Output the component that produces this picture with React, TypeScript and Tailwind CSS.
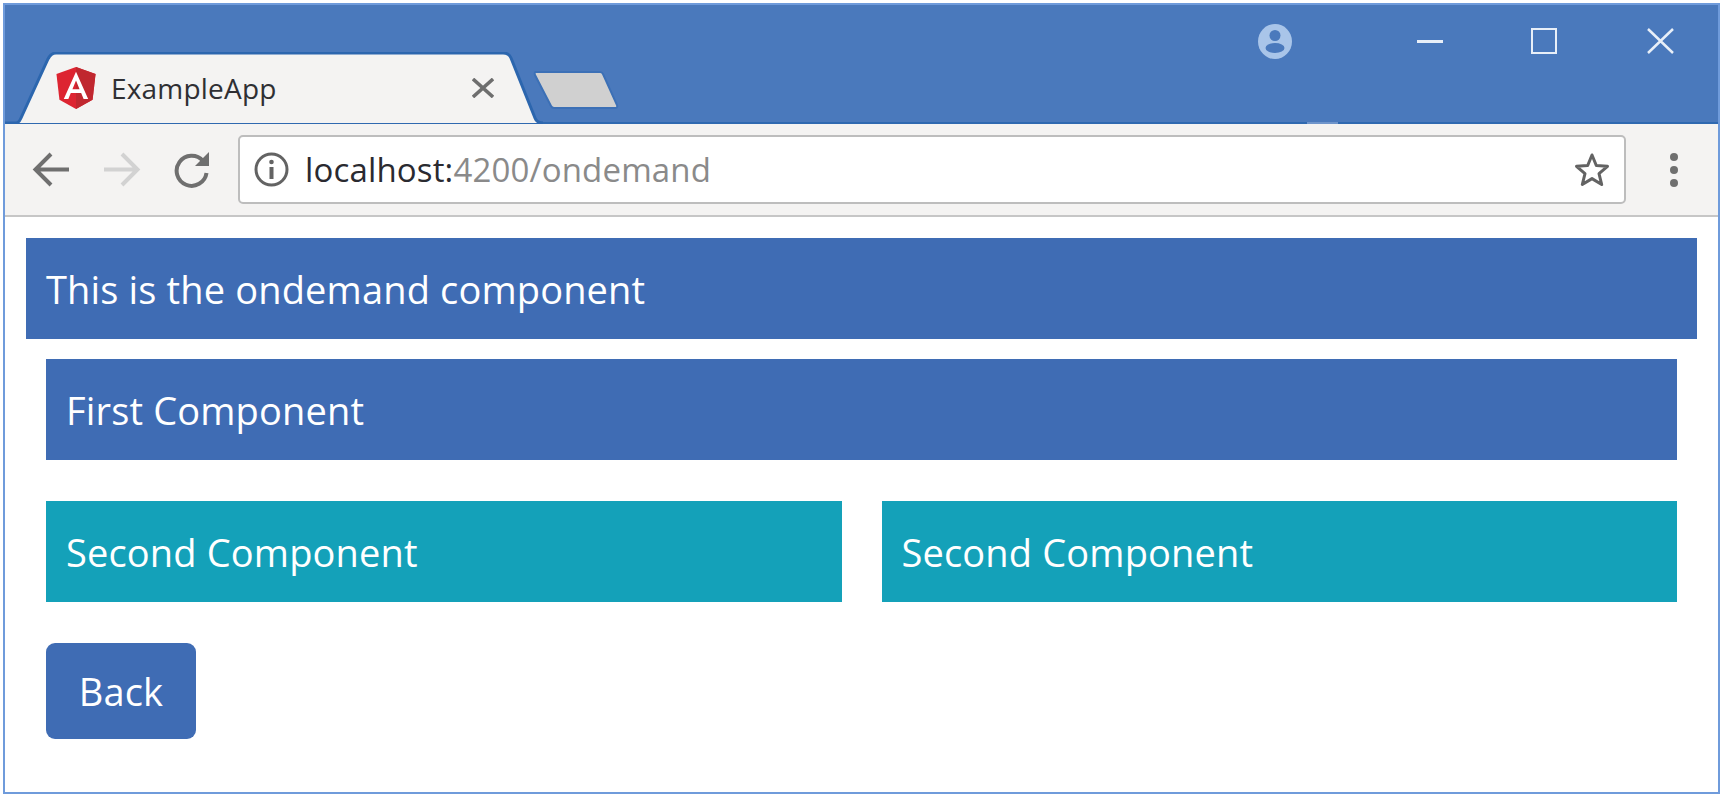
const sans = "font-['Open_Sans',sans-serif]";

function AngularLogo() {
  return (
    <svg viewBox="31 30 188 200" className="w-[40px] h-[42px] shrink-0">
      <polygon fill="#dd2431" points="125,30 31.9,63.2 46.1,186.3 125,230 203.9,186.3 218.1,63.2" />
      <polygon fill="#c0272f" points="125,30 125,230 203.9,186.3 218.1,63.2" />
      <path fill="#fff" d="M125 52.1 66.8 182.6h21.7l11.7-29.2h49.4l11.7 29.2h21.7L125 52.1zM142 135.4h-34l17-40.9 17 40.9z" />
    </svg>
  );
}

function Tab() {
  return (
    <div className="relative w-[540px] h-[72px] shrink-0 flex items-center pl-[51px]">
      <svg viewBox="0 0 540 72" className="absolute inset-0 w-full h-full">
        <path d="M0 71H11Q14 71 16 66L43 7Q46 1 51 1H498Q504 1 506 6L530 66Q532 71 538 71" fill="#f4f3f2" stroke="#2c66ae" strokeWidth="3" />
      </svg>
      <div className="relative flex items-center w-full">
        <AngularLogo />
        <span className={`ml-[15px] text-[28px] leading-none text-[#2f2f33] tracking-[0.2px] ${sans}`}>ExampleApp</span>
        <svg viewBox="0 0 22 20" className="ml-[195px] w-[22px] h-[20px]">
          <path d="M1 1 21 19M21 1 1 19" stroke="#6e6e6e" strokeWidth="3.5" />
        </svg>
      </div>
    </div>
  );
}

function TitleBar() {
  return (
    <div className="relative h-[119px] bg-[#4a79bc] border-b-[2px] border-[#2f69b0] flex items-start shrink-0">
      <div className="self-end -mb-[2px] flex">
        <Tab />
        <svg viewBox="0 0 88 42" className="self-end -ml-[13px] mb-[13px] w-[88px] h-[42px]">
          <path d="M4 3H68Q70 3 71 5L85 36Q86 39 83 39H22Q20 39 19 37L3 6Q2 3 4 3Z" fill="#d0d0d0" stroke="#3c70b6" strokeWidth="2" />
        </svg>
      </div>
      <div className="ml-auto flex items-center h-[72px] pr-[44px]">
        <svg viewBox="0 0 34 35" className="w-[34px] h-[35px]">
          <ellipse cx="17" cy="17.5" rx="17" ry="17.5" fill="#a9c5e9" />
          <circle cx="17" cy="11.5" r="5.5" fill="#4a79bc" />
          <ellipse cx="17" cy="24" rx="9.5" ry="5" fill="#4a79bc" />
        </svg>
        <div className="ml-[125px] w-[26px] h-[3px] bg-[#e8eff8]" />
        <div className="ml-[88px] w-[26px] h-[26px] border-[2.5px] border-[#e8eff8]" />
        <svg viewBox="0 0 27 26" className="ml-[90px] w-[27px] h-[26px]">
          <path d="M1 1 26 25M26 1 1 25" stroke="#e8eff8" strokeWidth="2.5" />
        </svg>
      </div>
      <div className="absolute right-[380px] -bottom-[2px] w-[31px] h-[2px] bg-[#6f95cb]" />
    </div>
  );
}

function Toolbar() {
  return (
    <div className="h-[93px] bg-[#f4f3f2] border-b-[2px] border-[#c6c6c6] flex items-center shrink-0 pl-[27px] pr-[40px]">
      <svg viewBox="0 0 37 35" className="w-[37px] h-[35px] shrink-0">
        <path d="M37 17.5H4M19 2 3.5 17.5 19 33" fill="none" stroke="#6f6f6f" strokeWidth="4" />
      </svg>
      <svg viewBox="0 0 37 35" className="ml-[35px] w-[37px] h-[35px] shrink-0">
        <path d="M0 17.5H33M18 2 33.5 17.5 18 33" fill="none" stroke="#d2d2d2" strokeWidth="4" />
      </svg>
      <svg viewBox="0 0 36 36" className="ml-[33px] w-[36px] h-[36px] shrink-0">
        <path d="M29 9A15 15 0 1 0 32.5 21" fill="none" stroke="#6f6f6f" strokeWidth="4" />
        <path d="M21 14H35V0Z" fill="#6f6f6f" />
      </svg>
      <div className="ml-[28px] flex-1 h-[69px] bg-white border-[2px] border-[#bdbdbd] rounded-[5px] flex items-center pl-[14px] pr-[14px]">
        <svg viewBox="0 0 35 35" className="w-[35px] h-[35px] shrink-0">
          <circle cx="17.5" cy="17.5" r="15.5" fill="none" stroke="#636363" strokeWidth="3" />
          <circle cx="17.5" cy="10" r="2.3" fill="#636363" />
          <rect x="15.5" y="15" width="4" height="12" fill="#636363" />
        </svg>
        <span className={`ml-[16px] text-[33px] leading-none tracking-[0.15px] text-[#8a8a8a] ${sans}`}>
          <span className="text-[#2a2a30]">localhost:</span>4200/ondemand
        </span>
        <svg viewBox="0 0 36 35" className="ml-auto w-[36px] h-[35px] shrink-0">
          <path d="M18 3 22.3 13.5 33.5 14.3 25 21.6 27.7 32.5 18 26.6 8.3 32.5 11 21.6 2.5 14.3 13.7 13.5Z" fill="none" stroke="#636363" strokeWidth="3" strokeLinejoin="round" />
        </svg>
      </div>
      <div className="ml-[44px] flex flex-col gap-[5px] shrink-0">
        <div className="w-[8px] h-[8px] rounded-full bg-[#6f6f6f]" />
        <div className="w-[8px] h-[8px] rounded-full bg-[#6f6f6f]" />
        <div className="w-[8px] h-[8px] rounded-full bg-[#6f6f6f]" />
      </div>
    </div>
  );
}

function Banner({ text, teal }: { text: string; teal?: boolean }) {
  return (
    <div className={`h-[101px] flex items-center px-[20px] text-white text-[38px] leading-none tracking-[0.15px] ${sans} ${teal ? "bg-[#14a1b9]" : "bg-[#3f6cb4]"}`}>
      {text}
    </div>
  );
}

export default function App() {
  return (
    <div className="w-full h-[800px] bg-white pl-[3px] pt-[3px] pr-[5px] pb-[6px]">
      <div className="h-full border-2 border-[#6f9bdb] flex flex-col">
        <TitleBar />
        <Toolbar />
        <div className="flex-1 pt-[21px] pl-[21px] pr-[21px] flex flex-col">
          <Banner text="This is the ondemand component" />
          <div className="mt-[20px] px-[20px] flex flex-col gap-[41px]">
            <Banner text="First Component" />
            <div className="grid grid-cols-2 gap-[40px]">
              <Banner text="Second Component" teal />
              <Banner text="Second Component" teal />
            </div>
            <button className={`w-[150px] h-[96px] rounded-[9px] bg-[#3f6cb4] text-white text-[38px] leading-none tracking-[0.15px] ${sans}`}>
              Back
            </button>
          </div>
        </div>
      </div>
    </div>
  );
}
